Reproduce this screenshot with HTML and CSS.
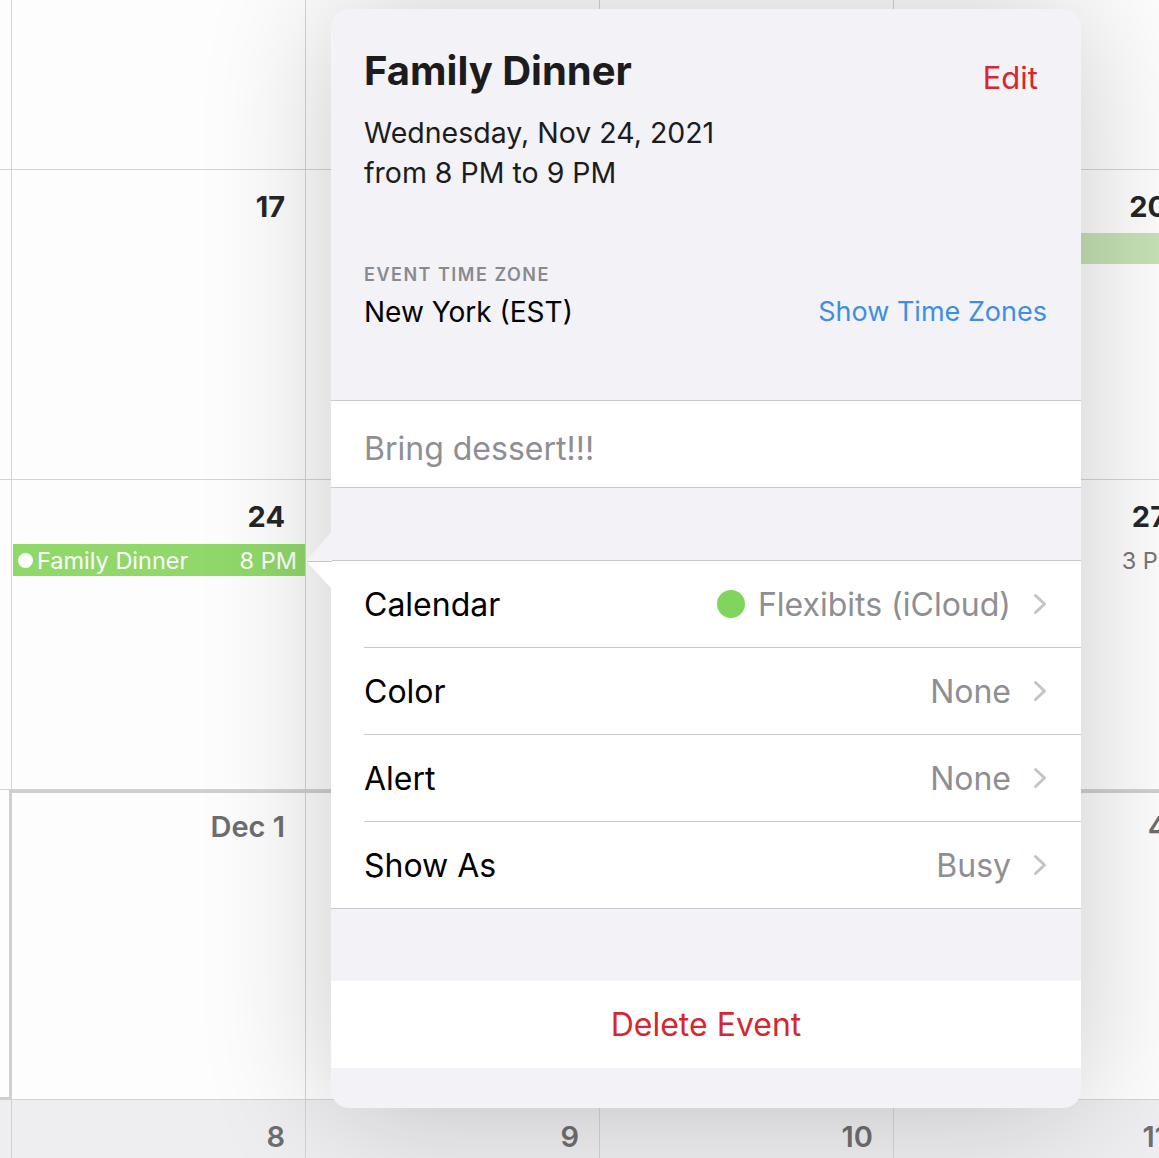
FILE: index.html
```html
<!DOCTYPE html>
<html lang="en">
<head>
  <meta charset="UTF-8" />
  <meta name="viewport" content="width=device-width, initial-scale=1.0"/>
  <title>Family Dinner</title>
  <link rel="stylesheet" href="styles.css">
</head>
<body>
  <div class="month">
    <!-- row 0 -->
    <div class="cell edge"></div>
    <div class="cell first-row"></div>
    <div class="cell first-row"></div>
    <div class="cell first-row"></div>
    <div class="cell first-row"></div>

    <!-- row 1 -->
    <div class="cell edge"></div>
    <div class="cell"><div class="day">17</div></div>
    <div class="cell"><div class="day">18</div></div>
    <div class="cell"><div class="day">19</div></div>
    <div class="cell"><div class="day">20</div><div class="allday"></div></div>

    <!-- row 2 -->
    <div class="cell edge"></div>
    <div class="cell">
      <div class="day">24</div>
      <div class="event selected">
        <span class="event-dot"></span>
        <span class="event-title">Family Dinner</span>
        <span class="event-time">8 PM</span>
      </div>
    </div>
    <div class="cell"><div class="day">25</div></div>
    <div class="cell"><div class="day">26</div></div>
    <div class="cell">
      <div class="day">27</div>
      <div class="event plain">
        <span class="event-title">Movie</span>
        <span class="event-time">3 PM</span>
      </div>
    </div>

    <!-- row 3 -->
    <div class="cell edge month-end"></div>
    <div class="cell next month-top"><div class="day">Dec 1</div></div>
    <div class="cell next month-top"><div class="day">2</div></div>
    <div class="cell next month-top"><div class="day">3</div></div>
    <div class="cell next month-top"><div class="day">4</div></div>

    <!-- row 4 -->
    <div class="cell edge shaded"></div>
    <div class="cell next shaded"><div class="day">8</div></div>
    <div class="cell next shaded"><div class="day">9</div></div>
    <div class="cell next shaded"><div class="day">10</div></div>
    <div class="cell next shaded"><div class="day">11</div></div>
  </div>

  <div class="popover">
    <svg class="arrow" width="26" height="58" viewBox="0 0 26 58">
      <polygon points="26,0 0,30 26,30" fill="#f2f2f7"/>
      <polygon points="0,30 26,30 26,58" fill="#ffffff"/>
      <line x1="1" y1="30.5" x2="26" y2="30.5" stroke="#c8c8cc" stroke-width="1"/>
    </svg>

    <div class="header">
      <div class="title-row">
        <h1 class="title">Family Dinner</h1>
        <span class="edit">Edit</span>
      </div>
      <div class="when">Wednesday, Nov 24, 2021</div>
      <div class="when">from 8 PM to 9 PM</div>

      <div class="tz-label">EVENT TIME ZONE</div>
      <div class="tz-row">
        <span class="tz-name">New York (EST)</span>
        <span class="tz-link">Show Time Zones</span>
      </div>
    </div>

    <div class="notes">Bring dessert!!!</div>

    <div class="gap"></div>

    <div class="rows">
      <div class="row">
        <div class="row-body">
          <span class="row-label">Calendar</span>
          <span class="row-value"><span class="cal-dot"></span>Flexibits (iCloud)</span>
          <svg class="chevron" width="14" height="22" viewBox="0 0 14 22"><polyline points="2.5,2.5 11.5,11 2.5,19.5" fill="none" stroke="#c4c4c7" stroke-width="3" stroke-linecap="round" stroke-linejoin="round"/></svg>
        </div>
      </div>
      <div class="row">
        <div class="row-body">
          <span class="row-label">Color</span>
          <span class="row-value">None</span>
          <svg class="chevron" width="14" height="22" viewBox="0 0 14 22"><polyline points="2.5,2.5 11.5,11 2.5,19.5" fill="none" stroke="#c4c4c7" stroke-width="3" stroke-linecap="round" stroke-linejoin="round"/></svg>
        </div>
      </div>
      <div class="row">
        <div class="row-body">
          <span class="row-label">Alert</span>
          <span class="row-value">None</span>
          <svg class="chevron" width="14" height="22" viewBox="0 0 14 22"><polyline points="2.5,2.5 11.5,11 2.5,19.5" fill="none" stroke="#c4c4c7" stroke-width="3" stroke-linecap="round" stroke-linejoin="round"/></svg>
        </div>
      </div>
      <div class="row">
        <div class="row-body">
          <span class="row-label">Show As</span>
          <span class="row-value">Busy</span>
          <svg class="chevron" width="14" height="22" viewBox="0 0 14 22"><polyline points="2.5,2.5 11.5,11 2.5,19.5" fill="none" stroke="#c4c4c7" stroke-width="3" stroke-linecap="round" stroke-linejoin="round"/></svg>
        </div>
      </div>
    </div>

    <div class="gap"></div>

    <div class="delete">Delete Event</div>

    <div class="footer"></div>
  </div>
</body>
</html>
```

FILE: styles.css
```css
* {
  box-sizing: border-box;
}

body {
  margin: 0;
  font-family: Inter, "Noto Sans", sans-serif;
  background: #fdfdfd;
  overflow: hidden;
}

/* calendar grid behind the popover */
.month {
  display: grid;
  grid-template-columns: 12px repeat(4, 294px);
  grid-template-rows: 170px repeat(4, 310px);
  width: 1159px;
  height: 1158px;
  overflow: hidden;
}

.cell {
  background: #fdfdfd;
  border-right: 1px solid #d4d4d6;
  border-bottom: 1px solid #d4d4d6;
  padding: 20px 20px 0 0;
  min-width: 0;
  overflow: hidden;
}

.cell.first-row,
.cell.edge {
  padding: 0;
}

.cell.shaded {
  background: #eeeef0;
}

.month-top {
  border-top: 3px solid #cfcfd1;
  padding-top: 17px;
}

.month-end {
  border-right: 3px solid #cfcfd1;
  border-bottom: 3px solid #cfcfd1;
}

.day {
  text-align: right;
  font-size: 29px;
  line-height: 34px;
  font-weight: 700;
  color: #262628;
}

.next .day {
  color: #6e6e70;
  font-weight: 600;
}

.allday {
  height: 31px;
  margin-top: 9px;
  margin-right: -20px;
  background: #c6e2b5;
}

.event {
  display: flex;
  align-items: center;
  height: 32px;
  margin-top: 10px;
  margin-right: -20px;
  margin-left: 1px;
  padding: 0 8px 0 5px;
  font-size: 23.5px;
  white-space: nowrap;
}

.event.selected {
  background: #90d86a;
  color: #fff;
}

.event.plain {
  color: #777779;
}

.event-dot {
  width: 15px;
  height: 15px;
  border-radius: 50%;
  background: #fff;
  margin-right: 4px;
  flex-shrink: 0;
}

.event-title {
  flex: 1;
  overflow: hidden;
}

.event-time {
  margin-left: 8px;
}

/* event popover */
.popover {
  position: absolute;
  left: 331px;
  top: 9px;
  width: 750px;
  background: #f2f2f7;
  border-radius: 18px;
  box-shadow: 0 0 130px rgba(0, 0, 0, 0.2);
}

.arrow {
  position: absolute;
  left: -25px;
  top: 522px;
}

.header {
  height: 392px;
  padding: 36px 34px 0 33px;
  border-bottom: 1px solid #c8c8cc;
}

.title-row {
  display: flex;
  justify-content: space-between;
  align-items: center;
  margin-bottom: 17px;
}

.title {
  margin: 0;
  font-size: 40px;
  line-height: 46px;
  font-weight: 700;
  color: #1c1c1e;
}

.edit {
  margin-top: 14px;
  margin-right: 9px;
  font-size: 31px;
  color: #d7262d;
}

.when {
  font-size: 28.5px;
  line-height: 40px;
  color: #1c1c1e;
}

.tz-label {
  margin-top: 71px;
  font-size: 18px;
  line-height: 22px;
  font-weight: 600;
  letter-spacing: 1.5px;
  color: #8a8a8e;
}

.tz-row {
  display: flex;
  justify-content: space-between;
  margin-top: 6px;
  font-size: 28px;
  line-height: 40px;
}

.tz-name {
  color: #000;
}

.tz-link {
  font-size: 27px;
  color: #3d8fe2;
}

.notes {
  display: flex;
  align-items: center;
  height: 87px;
  padding: 8px 33px 0;
  background: #fff;
  border-bottom: 1px solid #c8c8cc;
  font-size: 32px;
  color: #8e8e93;
}

.gap {
  height: 72px;
}

.rows {
  background: #fff;
  border-top: 1px solid #c8c8cc;
  border-bottom: 1px solid #c8c8cc;
}

.row {
  padding-left: 33px;
}

.row-body {
  display: flex;
  align-items: center;
  height: 87px;
  padding-right: 34px;
  border-bottom: 1px solid #c8c8cc;
  font-size: 32px;
}

.row:last-child .row-body {
  border-bottom: none;
  height: 86px;
}

.row-label {
  flex: 1;
  color: #000;
}

.row-value {
  display: flex;
  align-items: center;
  color: #8e8e93;
  margin-right: 22px;
}

.cal-dot {
  width: 28px;
  height: 28px;
  border-radius: 50%;
  background: #80d65c;
  margin-right: 13px;
}

.delete {
  display: flex;
  align-items: center;
  justify-content: center;
  height: 87px;
  background: #fff;
  font-size: 32px;
  color: #d7262d;
}

.footer {
  height: 40px;
}
```
